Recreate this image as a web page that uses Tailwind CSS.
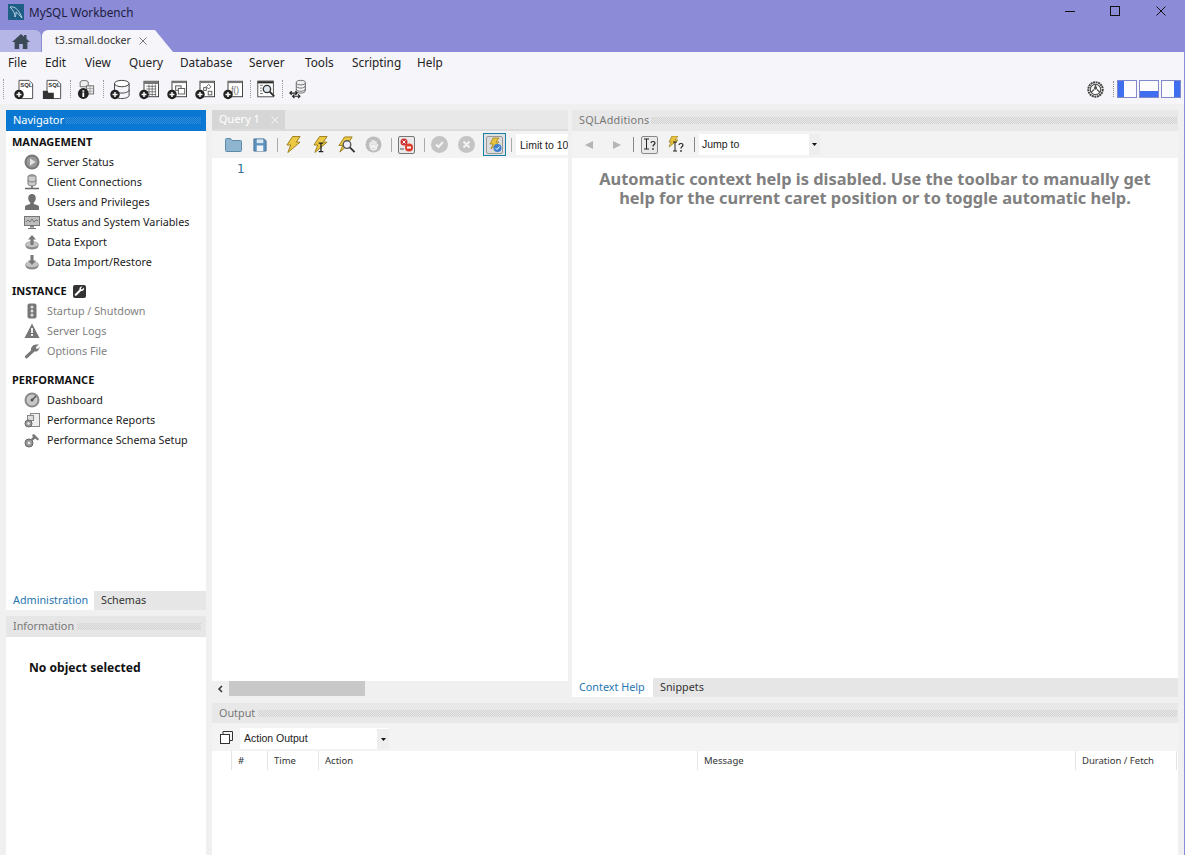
<!DOCTYPE html>
<html><head><meta charset="utf-8"><title>MySQL Workbench</title>
<script src="https://cdn.jsdelivr.net/npm/@tailwindcss/browser@4"></script></head>
<body class="m-0 overflow-hidden">
<svg width="0" height="0" class="absolute"><defs>
<g id="plus"><circle cx="5.500" cy="18" r="5.200" fill="#222"/><path d="M2.800 18h5.400M5.500 15.300v5.400" stroke="#fff" stroke-width="1.600"/></g>
</defs></svg>
<div class="w-[1185px] h-[855px] flex flex-col bg-[#f0f0f0] border-r border-[#8b8bd8] font-['Noto_Sans',sans-serif] text-[10.8px] text-[#1a1a1a] overflow-hidden">
  <!-- Title -->
  <div class="h-[52px] bg-[#8b8bd8] flex flex-col shrink-0">
    <div class="h-[30px] flex items-start">
      <svg class="ml-[8px] mt-[4px]" width="16" height="16" viewBox="0 0 16 16"><rect width="16" height="16" fill="#1f5f86"/><path d="M2 3c5-1 9 3 12 11-3-3-4-5-6-6 0 2 0 3-1 5C7 9 5 6 2 3z" fill="none" stroke="#b9d3e3" stroke-width="1"/></svg>
      <span class="ml-[5px] mt-[3px] text-[11.750px] leading-[18px] text-[#1c1c3c]">MySQL Workbench</span>
      <div class="ml-auto flex">
        <svg class="mr-[35px] mt-[6px]" width="10" height="10" viewBox="0 0 10 10"><path d="M0 5.500h10" stroke="#111"/></svg>
        <svg class="mr-[36px] mt-[6px]" width="10" height="10" viewBox="0 0 10 10"><rect x=".5" y=".5" width="9" height="9" fill="none" stroke="#111"/></svg>
        <svg class="mr-[18px] mt-[6px]" width="10" height="10" viewBox="0 0 10 10"><path d="M.5.5l9 9M9.500.5l-9 9" stroke="#111"/></svg>
      </div>
    </div>
    <div class="h-[22px] flex items-stretch">
      <div class="w-[41px] bg-[#b6b6e6] rounded-tr-[6px] flex items-center justify-center">
        <svg width="18" height="15" viewBox="0 0 18 15"><path d="M9 0L0 8h2.600v7h4.600v-5h3.600v5h4.600V8H18L14.500 4.800V1h-2.400v1.700z" fill="#3c4a58"/></svg>
      </div>
      <div class="ml-[1px] w-[131px] bg-[#f5f5fa] rounded-tl-[6px] flex items-center [clip-path:polygon(0_0,113px_0,131px_100%,0_100%)]">
        <span class="ml-[13px] text-[10.600px] text-[#333]">t3.small.docker</span>
        <svg class="ml-[8px]" width="8" height="8" viewBox="0 0 8 8"><path d="M.5.5l7 7M7.500.5l-7 7" stroke="#777"/></svg>
      </div>
    </div>
  </div>
  <!-- Menu -->
  <div class="h-[22px] bg-[#f5f5fa] flex items-center pl-[8px] text-[11.800px] text-[#222] shrink-0">
    <span class="w-[37px]">File</span><span class="w-[40px]">Edit</span><span class="w-[44px]">View</span><span class="w-[51px]">Query</span><span class="w-[69px]">Database</span><span class="w-[56px]">Server</span><span class="w-[47px]">Tools</span><span class="w-[65px]">Scripting</span><span>Help</span>
  </div>
  <!-- Main toolbar -->
  <div class="h-[30px] bg-[#f5f5fa] flex items-center shrink-0">
    <div class="ml-[3px] h-[20px] border-l border-dotted border-[#999]"></div>
    <svg class="ml-[10px]" width="20" height="22" viewBox="0 0 22 24"><path d="M5.500 2.500h11l4 4v16h-15z" fill="#fff" stroke="#444"/><text x="7" y="10" font-size="6.500" font-weight="700" fill="#333" font-family="Liberation Sans">SQL</text><use href="#plus"/></svg>
    <svg class="ml-[8px]" width="20" height="22" viewBox="0 0 22 24"><path d="M5.500 2.500h11l4 4v16h-15z" fill="#fff" stroke="#444"/><text x="7" y="10" font-size="6.500" font-weight="700" fill="#333" font-family="Liberation Sans">SQL</text><path d="M1 14h5l1 2h6v7H1z" fill="#333"/></svg>
    <div class="ml-[8px] h-[18px] border-l border-dotted border-[#999]"></div>
    <svg class="ml-[6px]" width="18" height="22" viewBox="0 0 20 24"><ellipse cx="8" cy="4.500" rx="4.500" ry="2" fill="#eee" stroke="#666"/><path d="M3.500 4.500v5h9v-5" fill="#eee" stroke="#666"/><rect x="10.500" y="8.500" width="8" height="9" fill="#eee" stroke="#666"/><path d="M10.500 11.500h8M10.500 14.500h8M14.500 8.500v9" stroke="#888" stroke-width=".7"/><circle cx="7" cy="17" r="6" fill="#222"/><path d="M7 13.500v1.500M7 16v5" stroke="#fff" stroke-width="2"/></svg>
    <div class="ml-[8px] h-[18px] border-l border-dotted border-[#999]"></div>
    <svg class="ml-[6px]" width="20" height="22" viewBox="0 0 22 24"><ellipse cx="13" cy="6" rx="8" ry="3.500" fill="#fff" stroke="#333"/><path d="M5 6v13c0 2 4 3.500 8 3.500s8-1.500 8-3.500V6M5 13c0 2 4 3.500 8 3.500s8-1.500 8-3.500" fill="none" stroke="#333"/><use href="#plus"/></svg>
    <svg class="ml-[9px]" width="20" height="22" viewBox="0 0 22 24"><rect x="5.500" y="3.500" width="16" height="17" fill="#fff" stroke="#333"/><path d="M5.500 3.500h16v3h-16z" fill="#777"/><path d="M8 9h11M8 12h11M8 15h11M8 18h11M11 7v13M14.500 7v13M18 7v13" stroke="#555" stroke-width=".8"/><use href="#plus"/></svg>
    <svg class="ml-[8px]" width="20" height="22" viewBox="0 0 22 24"><rect x="5.500" y="3.500" width="16" height="17" fill="#fff" stroke="#333"/><path d="M5.500 3.500h16v2h-16z" fill="#777"/><rect x="9.500" y="8.500" width="6" height="5" fill="#eee" stroke="#555"/><rect x="12.500" y="11.500" width="7" height="6" fill="#fff" stroke="#555"/><use href="#plus"/></svg>
    <svg class="ml-[8px]" width="20" height="22" viewBox="0 0 22 24"><rect x="5.500" y="3.500" width="16" height="17" fill="#fff" stroke="#333"/><path d="M5.500 3.500h16v2h-16z" fill="#777"/><path d="M15 7l2.500 2.500L15 12l-2.500-2.500z" fill="none" stroke="#555"/><rect x="9.500" y="10.500" width="3" height="3" fill="none" stroke="#555"/><rect x="14.500" y="14.500" width="4" height="4" fill="none" stroke="#555"/><use href="#plus"/></svg>
    <svg class="ml-[8px]" width="20" height="22" viewBox="0 0 22 24"><rect x="5.500" y="3.500" width="16" height="17" fill="#fff" stroke="#333"/><path d="M5.500 3.500h16v2h-16z" fill="#777"/><text x="9" y="16" font-size="9" fill="#666" font-family="Liberation Sans">f()</text><use href="#plus"/></svg>
    <div class="ml-[7px] h-[18px] border-l border-dotted border-[#999]"></div>
    <svg class="ml-[6px]" width="19" height="22" viewBox="0 0 20 24"><rect x=".5" y="3.500" width="17" height="17" fill="#fff" stroke="#444"/><path d="M.5 3.500h17v2H.5zM3 8h3M3 11h2M3 14h2M3 17h3" stroke="#666"/><circle cx="10.500" cy="12" r="4" fill="#dfe8ef" stroke="#333" stroke-width="1.500"/><path d="M13.500 15l5 5" stroke="#333" stroke-width="2"/></svg>
    <div class="ml-[6px] h-[18px] border-l border-dotted border-[#999]"></div>
    <svg class="ml-[6px]" width="20" height="22" viewBox="0 0 22 24"><ellipse cx="13" cy="5" rx="5" ry="2.500" fill="#eee" stroke="#666"/><path d="M8 5v9c0 1.500 2.500 2.500 5 2.500s5-1 5-2.500V5M8 8.500c0 1.500 2.500 2.500 5 2.500s5-1 5-2.500M8 12c0 1.500 2.500 2.500 5 2.500s5-1 5-2.500" fill="none" stroke="#666"/><path d="M1 16.500h8M3 14.500l-2 2 2 2M7 14.500l2 2-2 2M4 20h8M6 18l-2 2 2 2M10 18l2 2-2 2" fill="none" stroke="#222" stroke-width="1.300"/></svg>
    <div class="ml-auto flex items-center">
      <svg width="17" height="17" viewBox="0 0 17 17"><circle cx="8.500" cy="8.500" r="7.200" fill="#fff" stroke="#444" stroke-width="2" stroke-dasharray="2 .6"/><circle cx="8.500" cy="8.500" r="5.200" fill="none" stroke="#555" stroke-width="1.200"/><circle cx="8.500" cy="7" r="1.700" fill="#555"/><path d="M8.500 8v-4M7 8.500L4 11.500M10 8.500l3 3" stroke="#555" stroke-width="1.300"/></svg>
      <div class="ml-[9px] h-[16px] border-l border-dotted border-[#888]"></div>
      <div class="ml-[3px] w-[20px] h-[18px] border border-[#7f88c8] bg-[#fcfcff] flex"><div class="w-[6px] bg-[#3f6fee]"></div></div>
      <div class="ml-[2px] w-[20px] h-[18px] border border-[#7f88c8] bg-[#fcfcff] flex flex-col justify-end"><div class="h-[6px] bg-[#3f6fee]"></div></div>
      <div class="ml-[2px] mr-[3px] w-[20px] h-[18px] border border-[#7f88c8] bg-[#fcfcff] flex justify-end"><div class="w-[6px] bg-[#3f6fee]"></div></div>
    </div>
  </div>
  <!-- Workspace -->
  <div class="flex-1 min-h-0 flex pl-[6px] pr-[6px] pt-[6px]">
    <!-- Sidebar -->
    <div class="w-[200px] flex flex-col shrink-0">
      <div class="h-[21px] bg-[#0a78d2] flex items-center pl-[7px] pr-[5px] text-white text-[11px]">
        <span>Navigator</span><div class="ml-[1px] flex-1 h-[7px] bg-[repeating-conic-gradient(#2f8cd9_0_25%,transparent_0_50%)] bg-[length:2px_2px]"></div>
      </div>
      <div class="h-[460px] bg-white pl-[6px] flex flex-col">
        <div class="h-[21px] pt-[1px] flex items-center font-bold text-[11px] text-[#111]">MANAGEMENT</div>
        <div class="h-[20px] flex items-center pl-[12px]"><svg width="16" height="16" viewBox="0 0 16 16"><circle cx="8" cy="8" r="7.500" fill="#777"/><circle cx="8" cy="8" r="5.500" fill="#9a9a9a"/><path d="M6 4.500v7L11.500 8z" fill="#e4e4e4"/></svg><span class="ml-[7px]">Server Status</span></div>
        <div class="h-[20px] flex items-center pl-[12px]"><svg width="16" height="16" viewBox="0 0 16 16"><ellipse cx="8" cy="2.800" rx="4" ry="2" fill="#aaa" stroke="#777"/><path d="M4 3v7c0 1 2 2 4 2s4-1 4-2V3" fill="#ccc" stroke="#777"/><path d="M4 6c0 1 2 2 4 2s4-1 4-2" fill="none" stroke="#777"/><path d="M8 12v2M1 14.500h14" stroke="#666" stroke-width="1.400"/></svg><span class="ml-[7px]">Client Connections</span></div>
        <div class="h-[20px] flex items-center pl-[12px]"><svg width="16" height="16" viewBox="0 0 16 16"><path d="M8 0c2.500 0 3.800 2 3.800 4.200 0 2-1 3.500-2 4.300v1.500c2 .5 5.200 1.200 5.200 3v3H1v-3c0-1.800 3.200-2.500 5.200-3V8.500c-1-.8-2-2.300-2-4.300C4.200 2 5.500 0 8 0z" fill="#6f6f6f"/></svg><span class="ml-[7px]">Users and Privileges</span></div>
        <div class="h-[20px] flex items-center pl-[12px]"><svg width="16" height="16" viewBox="0 0 16 16"><rect x=".5" y="2.500" width="15" height="9" fill="#bdbdbd" stroke="#777"/><path d="M2 8l2-2 2 2 2-3 2 3 2-2 2 1" fill="none" stroke="#666" stroke-width=".8"/><path d="M6 12h4v1.500H6zM4 14h8v1H4z" fill="#777"/></svg><span class="ml-[7px]">Status and System Variables</span></div>
        <div class="h-[20px] flex items-center pl-[12px]"><svg width="16" height="16" viewBox="0 0 16 16"><ellipse cx="8" cy="12" rx="6.500" ry="3.500" fill="#8a8a8a"/><ellipse cx="8" cy="10.500" rx="6.500" ry="3" fill="#c4c4c4" stroke="#888" stroke-width=".6"/><path d="M8 1l4 4.500H9.500V11h-3V5.500H4z" fill="#777"/></svg><span class="ml-[7px]">Data Export</span></div>
        <div class="h-[20px] flex items-center pl-[12px]"><svg width="16" height="16" viewBox="0 0 16 16"><ellipse cx="8" cy="12" rx="6.500" ry="3.500" fill="#8a8a8a"/><ellipse cx="8" cy="10.500" rx="6.500" ry="3" fill="#c4c4c4" stroke="#888" stroke-width=".6"/><path d="M8 11L4 6.500h2.500V1h3v5.500H12z" fill="#777"/></svg><span class="ml-[7px]">Data Import/Restore</span></div>
        <div class="mt-[9px] h-[20px] flex items-center font-bold text-[11px] text-[#111]">INSTANCE<svg class="ml-[6px]" width="13" height="13" viewBox="0 0 13 13"><rect width="13" height="13" rx="2" fill="#333"/><path d="M11 2.500L9 4.500 8 4l0-1 1.500-1.500C7.500 1 6 2.500 6.500 4.500L2 9c-1 1 .5 2.500 1.500 1.500L8 6c2 .5 3.500-1 3-3.500z" fill="#fff"/></svg></div>
        <div class="h-[20px] flex items-center pl-[12px] text-[#808080]"><svg width="16" height="16" viewBox="0 0 16 16"><rect x="3.500" y=".5" width="9" height="15" rx="2" fill="#777"/><circle cx="8" cy="4" r="1.500" fill="#ddd"/><circle cx="8" cy="8" r="1.500" fill="#ddd"/><circle cx="8" cy="12" r="1.500" fill="#ddd"/></svg><span class="ml-[7px]">Startup / Shutdown</span></div>
        <div class="h-[20px] flex items-center pl-[12px] text-[#808080]"><svg width="16" height="16" viewBox="0 0 16 16"><path d="M8 .5l7.500 14.500H.5z" fill="#777"/><path d="M7 5h2v5H7zM7 11h2v2H7z" fill="#eee"/></svg><span class="ml-[7px]">Server Logs</span></div>
        <div class="h-[20px] flex items-center pl-[12px] text-[#808080]"><svg width="16" height="16" viewBox="0 0 16 16"><path d="M15 1.500l-3 2.500.5 2 2-.5 1-2c.3 3-2 5.500-5 5L3.500 15c-1 1-3 0-2.500-2l6-5.500c-.5-3 2-6 5-6z" fill="#777"/></svg><span class="ml-[7px]">Options File</span></div>
        <div class="mt-[9px] h-[20px] flex items-center font-bold text-[11px] text-[#111]">PERFORMANCE</div>
        <div class="h-[20px] flex items-center pl-[12px]"><svg width="16" height="16" viewBox="0 0 16 16"><circle cx="8" cy="8" r="7.500" fill="#8a8a8a"/><circle cx="8" cy="8" r="5.500" fill="#c8c8c8"/><path d="M8 8l4-4" stroke="#555" stroke-width="1.600"/><circle cx="8" cy="8" r="1.500" fill="#555"/></svg><span class="ml-[7px]">Dashboard</span></div>
        <div class="h-[20px] flex items-center pl-[12px]"><svg width="16" height="16" viewBox="0 0 16 16"><rect x="6.500" y="1.500" width="9" height="13" fill="#eee" stroke="#888"/><rect x="3.500" y="3.500" width="6" height="5" fill="#ddd" stroke="#888"/><circle cx="4.500" cy="11.500" r="3.500" fill="#999" stroke="#666"/><circle cx="4.500" cy="11.500" r="1.200" fill="#eee"/></svg><span class="ml-[7px]">Performance Reports</span></div>
        <div class="h-[20px] flex items-center pl-[12px]"><svg width="16" height="16" viewBox="0 0 16 16"><circle cx="5" cy="11" r="4" fill="#999" stroke="#666"/><circle cx="5" cy="11" r="1.300" fill="#eee"/><path d="M7 7l2-2-1-2 2-1 2 2 3 3-1 1.500-3-2-2 2z" fill="#777"/></svg><span class="ml-[7px]">Performance Schema Setup</span></div>
      </div>
      <div class="h-[19px] flex bg-[#e6e6e6]">
        <div class="w-[88px] bg-white pl-[7px] leading-[18px] text-[#1f76b0]">Administration</div>
        <div class="pl-[7px] leading-[18px] text-[#333]">Schemas</div>
      </div>
      <div class="mt-[6px] h-[21px] bg-[#e6e6e6] flex items-center pl-[7px] pr-[5px] text-[#777]">
        <span>Information</span><div class="ml-[3px] flex-1 h-[7px] bg-[repeating-conic-gradient(#d2d2d2_0_25%,transparent_0_50%)] bg-[length:2px_2px]"></div>
      </div>
      <div class="flex-1 bg-white pl-[23px] pt-[22px] font-bold text-[12.100px] leading-[18px] text-[#111]">No object selected</div>
    </div>
    <!-- Right area -->
    <div class="ml-[6px] w-[966px] flex flex-col">
      <div class="h-[587px] flex shrink-0">
        <!-- Query -->
        <div class="w-[356px] flex flex-col overflow-hidden">
          <div class="h-[21px] bg-[#e8e8e8] border-b-2 border-[#dcdcdc] flex">
            <div class="w-[73px] h-[19px] bg-[#d6d6d6] flex items-center pl-[7px] text-white text-[11px]">Query 1<svg class="ml-[11px]" width="8" height="8" viewBox="0 0 8 8"><path d="M.5.5l7 7M7.500.5l-7 7" stroke="#f5f5f5"/></svg></div>
          </div>
          <div class="h-[27px] bg-[#f3f3f3] flex items-center shrink-0">
            <svg class="ml-[13px]" width="17" height="15" viewBox="0 0 17 15"><path d="M.5 2.500a1 1 0 011-1h4l1.500 2h8.500a1 1 0 011 1v9a1 1 0 01-1 1h-14a1 1 0 01-1-1z" fill="#8fb4cf" stroke="#5f8bab"/></svg>
            <svg class="ml-[11px]" width="14" height="14" viewBox="0 0 15 15"><path d="M1 1h11l2 2v11H1z" fill="#5f93bd" stroke="#3f6f96"/><rect x="4" y="1.500" width="7" height="4" fill="#dce9f3"/><rect x="4" y="8" width="7" height="6" fill="#eef4f8"/></svg>
            <div class="ml-[10px] h-[14px] border-l border-[#aaa]"></div>
            <svg class="ml-[8px]" width="15" height="19" viewBox="0 0 16 19"><path d="M7 1h8l-4 6h4L2 18l3-8H1z" fill="#ebc944" stroke="#9b7b16"/></svg>
            <svg class="ml-[12px]" width="15" height="19" viewBox="0 0 16 19"><path d="M7 1h8l-4 6h4L2 18l3-8H1z" fill="#ebc944" stroke="#9b7b16"/><path d="M6 8h5M8.500 8v9M6 17h5" stroke="#222" stroke-width="1.400"/></svg>
            <svg class="ml-[10px]" width="18" height="18" viewBox="0 0 19 19"><path d="M7 1h8l-4 6h2L2 17l3-7H1z" fill="#ebc944" stroke="#9b7b16"/><circle cx="9.500" cy="9" r="4" fill="#eef" stroke="#555" stroke-width="1.400"/><path d="M12.500 12l5 5" stroke="#333" stroke-width="2"/></svg>
            <svg class="ml-[9px]" width="17" height="17" viewBox="0 0 18 18"><circle cx="9" cy="9" r="8.500" fill="#bdbdbd"/><path d="M5.500 10V6.500M7.500 9V4.500M9.500 9V4.500M11.500 9V5.500M5.500 9.500c0 3 1.500 5 3.500 5s3.500-1.500 3.500-4l1-2" stroke="#f2f2f2" stroke-width="1.600" fill="none"/><path d="M6.500 9h5v4h-5z" fill="#f2f2f2"/></svg>
            <div class="ml-[9px] h-[14px] border-l border-[#aaa]"></div>
            <svg class="ml-[6px]" width="17" height="18" viewBox="0 0 17 18"><rect x=".5" y=".5" width="16" height="17" rx="1.500" fill="#e9e9e9" stroke="#777"/><circle cx="6" cy="6" r="3.500" fill="#cc3030"/><path d="M4.500 4.500l3 3M7.500 4.500l-3 3" stroke="#fff"/><circle cx="11" cy="11.500" r="4" fill="#dd3a2a"/><rect x="9" y="10.500" width="4" height="2" fill="#fff"/><path d="M2 13h4" stroke="#555"/></svg>
            <div class="ml-[9px] h-[14px] border-l border-[#aaa]"></div>
            <svg class="ml-[6px]" width="17" height="17" viewBox="0 0 17 17"><circle cx="8.500" cy="8.500" r="8.500" fill="#c4c4c4"/><path d="M5 8.500l2.500 2.500L12 6" stroke="#f2f2f2" stroke-width="2.200" fill="none"/></svg>
            <svg class="ml-[10px]" width="17" height="17" viewBox="0 0 17 17"><circle cx="8.500" cy="8.500" r="8.500" fill="#c4c4c4"/><path d="M5.500 5.500l6 6M11.500 5.500l-6 6" stroke="#f2f2f2" stroke-width="2.200"/></svg>
            <div class="ml-[8px] w-[23px] h-[23px] border border-[#1a7fa8] bg-[#e2e2e2] flex items-center justify-center"><svg width="17" height="18" viewBox="0 0 17 18"><rect x=".5" y=".5" width="16" height="17" rx="1.500" fill="#dcdcdc" stroke="#999"/><path d="M7 2h6l-3 4h3L5 13l2-5H4z" fill="#e6c33e" stroke="#9b7b16" stroke-width=".7"/><circle cx="11.500" cy="12" r="4" fill="#3f7fd0"/><path d="M9.500 12l1.500 1.500 2.500-3" stroke="#fff" fill="none"/></svg></div>
            <div class="ml-[5px] h-[14px] border-l border-[#aaa]"></div>
            <div class="ml-[4px] flex-1 h-[21px] bg-white pl-[4px] leading-[23px] text-[10.500px] [font-family:'Liberation_Sans',sans-serif] text-[#222] whitespace-nowrap overflow-hidden">Limit to 10</div>
          </div>
          <div class="flex-1 bg-white pl-[25px] pt-[2px] text-[#2d6f94] text-[12px] leading-[18px] [font-family:'DejaVu_Sans',sans-serif]">1</div>
          <div class="h-[15px] bg-[#f0f0f0] flex shrink-0">
            <svg class="ml-[5px] mt-[4px]" width="7" height="8" viewBox="0 0 7 8"><path d="M5 1L2 4l3 3" stroke="#333" stroke-width="1.500" fill="none"/></svg>
            <div class="ml-[5px] w-[136px] bg-[#c8c8c8]"></div>
          </div>
          <div class="h-[1px] shrink-0"></div>
        </div>
        <!-- SQL Additions -->
        <div class="ml-[4px] w-[606px] flex flex-col">
          <div class="h-[21px] bg-[#e8e8e8] flex items-center pl-[7px] pr-[1px] text-[#777] tracking-[0.2px]">
            <span>SQLAdditions</span><div class="ml-[2px] flex-1 h-[7px] bg-[repeating-conic-gradient(#d2d2d2_0_25%,transparent_0_50%)] bg-[length:2px_2px]"></div>
          </div>
          <div class="h-[27px] bg-[#f3f3f3] flex items-center shrink-0">
            <svg class="ml-[12px]" width="10" height="10" viewBox="0 0 10 10"><path d="M9 1v8L1 5z" fill="#b5b5b5"/></svg>
            <svg class="ml-[18px]" width="10" height="10" viewBox="0 0 10 10"><path d="M1 1v8l8-4z" fill="#b5b5b5"/></svg>
            <div class="ml-[11px] h-[15px] border-l border-[#888]"></div>
            <div class="ml-[7px] w-[17px] h-[18px] border border-[#888] rounded-[2px] bg-[#e9e9e9] flex items-center justify-center">
              <svg width="13" height="14" viewBox="0 0 13 14"><path d="M1 1h5M3.500 1v10M1 11h5" stroke="#222" fill="none"/><path d="M8 5c0-2 4-2 4 0 0 1.500-2 1.500-2 3.500M10 10v2" stroke="#222" stroke-width="1.200" fill="none"/></svg></div>
            <svg class="ml-[10px]" width="17" height="18" viewBox="0 0 17 18"><path d="M4 0h6L7 4h3L1 11l2-5H1z" fill="#e6c33e" stroke="#9b7b16" stroke-width=".7"/><path d="M5 6h4M7 6v9M5 15h4" stroke="#222" fill="none"/><path d="M11 9c0-2 4-2 4 0 0 1.500-2 1.500-2 3.500M13 14v2" stroke="#222" stroke-width="1.200" fill="none"/></svg>
            <div class="ml-[9px] h-[15px] border-l border-[#888]"></div>
            <div class="ml-[4px] w-[121px] h-[21px] bg-white flex items-center pl-[3px] text-[10.500px] [font-family:'Liberation_Sans',sans-serif] text-[#222]">Jump to
              <div class="ml-auto w-[11px] h-[21px] bg-[#eeeeee] flex items-center justify-center"><svg width="5" height="3" viewBox="0 0 5 3"><path d="M0 0h5L2.500 3z" fill="#111"/></svg></div>
            </div>
          </div>
          <div class="flex-1 bg-white pt-[11px] text-center font-bold text-[#808080] text-[16.400px] leading-[19px]">Automatic context help is disabled. Use the toolbar to manually get<br>help for the current caret position or to toggle automatic help.</div>
          <div class="h-[19px] bg-[#e6e6e6] flex shrink-0">
            <div class="w-[81px] bg-white pl-[7px] leading-[18px] text-[#1f76b0]">Context Help</div>
            <div class="pl-[7px] leading-[18px] text-[#333]">Snippets</div>
          </div>
        </div>
      </div>
      <!-- Output -->
      <div class="mt-[6px] h-[20px] pt-[1px] bg-[#e8e8e8] flex items-center pl-[7px] pr-[1px] text-[#777] shrink-0">
        <span>Output</span><div class="ml-[3px] flex-1 h-[7px] bg-[repeating-conic-gradient(#d2d2d2_0_25%,transparent_0_50%)] bg-[length:2px_2px]"></div>
      </div>
      <div class="h-[28px] bg-[#f3f3f3] flex items-start pt-[5px] shrink-0">
        <svg class="ml-[8px] mt-[3px]" width="13" height="13" viewBox="0 0 13 13"><rect x=".5" y="3.500" width="9" height="9" fill="#fff" stroke="#333"/><path d="M3 3V.5h9.500v9H10" fill="none" stroke="#333"/></svg>
        <div class="ml-[7px] w-[149px] h-[21px] bg-white flex items-center pl-[4px] pt-[1px] text-[10.500px] [font-family:'Liberation_Sans',sans-serif] text-[#222]">Action Output
          <div class="ml-auto w-[12px] h-[20px] bg-[#eeeeee] flex items-center justify-center"><svg width="5" height="3" viewBox="0 0 5 3"><path d="M0 0h5L2.500 3z" fill="#111"/></svg></div>
        </div>
      </div>
      <div class="flex-1 bg-white">
        <div class="h-[19px] flex text-[9.500px] text-[#333] pl-[19px] leading-[19px]">
          <div class="w-[36px] border-l border-[#e4e4e4] pl-[6px]">#</div>
          <div class="w-[51px] border-l border-[#e4e4e4] pl-[6px]">Time</div>
          <div class="w-[379px] border-l border-[#e4e4e4] pl-[6px]">Action</div>
          <div class="w-[378px] border-l border-[#e4e4e4] pl-[6px]">Message</div>
          <div class="w-[102px] border-l border-r border-[#e4e4e4] pl-[6px]">Duration / Fetch</div>
        </div>
      </div>
    </div>
  </div>
</div>
</body></html>
